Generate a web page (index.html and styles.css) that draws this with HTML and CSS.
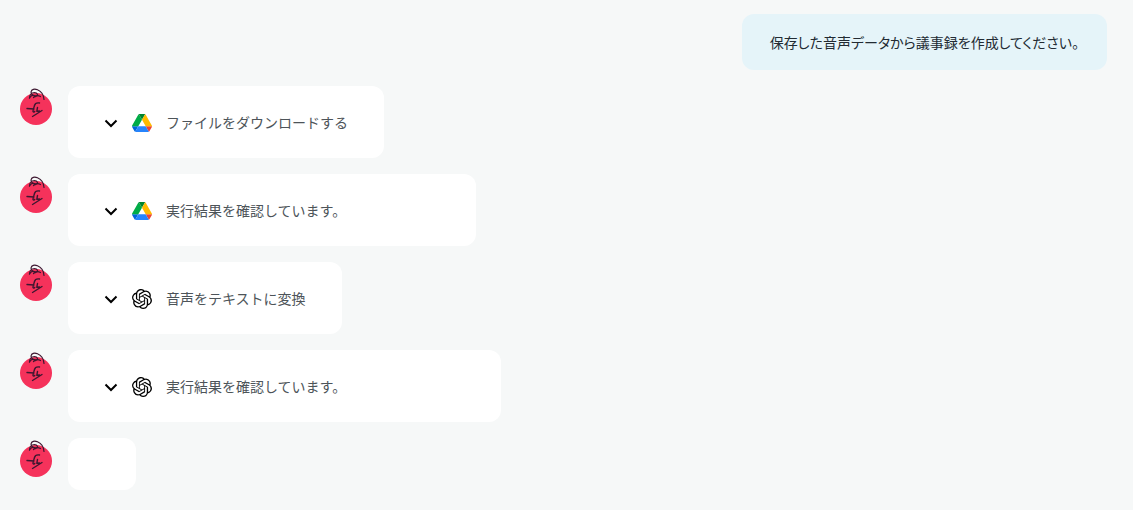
FILE: index.html
```html
<!DOCTYPE html>
<html lang="ja">
<head>
    <meta charset="UTF-8">
    <meta name="viewport" content="width=device-width, initial-scale=1.0">
    <title>チャット</title>
    <link rel="stylesheet" href="styles.css">
</head>
<body>
    <!-- アイコン定義 -->
    <svg class="icon-defs" aria-hidden="true">
        <symbol id="icon-avatar" viewBox="0 0 32 38">
            <circle cx="16" cy="21" r="16" fill="#f5325b"/>
            <g fill="none" stroke="#3d1730" stroke-width="1.2" stroke-linecap="round" stroke-linejoin="round">
                <path d="M9.500 10C9.500 7 11.500 4.500 14.500 4.500C17.500 4.700 18.500 7.500 16.500 8C13.500 8.300 11 6.500 11 4C11.500 1.200 14.500 .6 17.500 1.800C21 3.300 23.700 6.500 24 11.500"/>
                <path d="M9.500 10C11 7 13.500 6.500 15.500 8.500M13.500 9.500C15.500 7.500 18 7 20.500 8.500"/>
                <path stroke-width="1.400" d="M7 20.500L14 21M19.500 15C16.500 14.500 15 15.500 14.500 17.500C14.200 19 13 21.500 13 23.500C13.500 24.500 14.300 24 14.800 23.300M17.500 19.500L16.800 23.300M16.800 23.300L19.500 23M12.500 28.500L22 22.500"/>
            </g>
        </symbol>
        <symbol id="icon-chevron" viewBox="0 0 14 14">
            <path d="M1.500 4.500L7 10L12.500 4.500" fill="none" stroke="#000" stroke-width="2"/>
        </symbol>
        <symbol id="icon-drive" viewBox="0 0 87.300 78">
            <path fill="#0066da" d="m6.600 66.850 3.850 6.650c.8 1.400 1.950 2.500 3.300 3.300l13.750-23.800h-27.500c0 1.550.4 3.100 1.200 4.500z"/>
            <path fill="#00ac47" d="m43.650 25-13.750-23.800c-1.350.8-2.500 1.900-3.300 3.300l-25.400 44a9.060 9.060 0 0 0 -1.200 4.500h27.500z"/>
            <path fill="#ea4335" d="m73.550 76.800c1.350-.8 2.500-1.900 3.300-3.300l1.600-2.750 7.650-13.250c.8-1.400 1.200-2.950 1.200-4.500h-27.500l5.850 11.500z"/>
            <path fill="#00832d" d="m43.650 25 13.750-23.800c-1.350-.8-2.900-1.200-4.500-1.200h-18.500c-1.600 0-3.150.45-4.500 1.200z"/>
            <path fill="#2684fc" d="m59.800 53h-32.300l-13.750 23.800c1.350.8 2.900 1.200 4.500 1.200h50.800c1.600 0 3.150-.45 4.500-1.200z"/>
            <path fill="#ffba00" d="m73.400 26.500-12.700-22c-.8-1.400-1.950-2.500-3.300-3.300l-13.750 23.800 16.150 28h27.450c0-1.550-.4-3.100-1.200-4.500z"/>
        </symbol>
        <symbol id="icon-openai" viewBox="0 0 24 24">
            <path d="M22.2819 9.8211a5.9847 5.9847 0 0 0-.5157-4.9108 6.0462 6.0462 0 0 0-6.5098-2.9A6.0651 6.0651 0 0 0 4.9807 4.1818a5.9847 5.9847 0 0 0-3.9977 2.9 6.0462 6.0462 0 0 0 .7427 7.0966 5.98 5.98 0 0 0 .511 4.9107 6.051 6.051 0 0 0 6.5146 2.9001A5.9847 5.9847 0 0 0 13.2599 24a6.0557 6.0557 0 0 0 5.7718-4.2058 5.9894 5.9894 0 0 0 3.9977-2.9001 6.0557 6.0557 0 0 0-.7475-7.0729zm-9.022 12.6081a4.4755 4.4755 0 0 1-2.8764-1.0408l.1419-.0804 4.7783-2.7582a.7948.7948 0 0 0 .3927-.6813v-6.7369l2.02 1.1686a.071.071 0 0 1 .038.052v5.5826a4.504 4.504 0 0 1-4.4945 4.4944zm-9.6607-4.1254a4.4708 4.4708 0 0 1-.5346-3.0137l.142.0852 4.783 2.7582a.7712.7712 0 0 0 .7806 0l5.8428-3.3685v2.3324a.0804.0804 0 0 1-.0332.0615L9.74 19.9502a4.4992 4.4992 0 0 1-6.1408-1.6464zM2.3408 7.8956a4.485 4.485 0 0 1 2.3655-1.9728V11.6a.7664.7664 0 0 0 .3879.6765l5.8144 3.3543-2.0201 1.1685a.0757.0757 0 0 1-.071 0l-4.8303-2.7865A4.504 4.504 0 0 1 2.3408 7.872zm16.5963 3.8558L13.1038 8.364 15.1192 7.2a.0757.0757 0 0 1 .071 0l4.8303 2.7913a4.4944 4.4944 0 0 1-.6765 8.1042v-5.6772a.79.79 0 0 0-.407-.667zm2.0107-3.0231l-.142-.0852-4.7735-2.7818a.7759.7759 0 0 0-.7854 0L9.409 9.2297V6.8974a.0662.0662 0 0 1 .0284-.0615l4.8303-2.7866a4.4992 4.4992 0 0 1 6.6802 4.66zM8.3065 12.863l-2.02-1.1638a.0804.0804 0 0 1-.038-.0567V6.0742a4.4992 4.4992 0 0 1 7.3757-3.4537l-.142.0805L8.704 5.459a.7948.7948 0 0 0-.3927.6813zm1.0976-2.3654l2.602-1.4998 2.6069 1.4998v2.9994l-2.5974 1.4997-2.6067-1.4997Z"/>
        </symbol>
    </svg>

    <main class="chat">
        <!-- ユーザーの発言 -->
        <div class="user-message">
            <p>保存した音声データから議事録を作成してください。</p>
        </div>

        <!-- アシスタントの実行ステップ -->
        <div class="message">
            <svg class="avatar" aria-hidden="true"><use href="#icon-avatar"/></svg>
            <div class="card">
                <button type="button" class="step">
                    <svg class="chevron" aria-hidden="true"><use href="#icon-chevron"/></svg>
                    <svg class="service" aria-hidden="true"><use href="#icon-drive"/></svg>
                    <span>ファイルをダウンロードする</span>
                </button>
            </div>
        </div>

        <div class="message">
            <svg class="avatar" aria-hidden="true"><use href="#icon-avatar"/></svg>
            <div class="card card-result">
                <button type="button" class="step">
                    <svg class="chevron" aria-hidden="true"><use href="#icon-chevron"/></svg>
                    <svg class="service" aria-hidden="true"><use href="#icon-drive"/></svg>
                    <span>実行結果を確認しています。</span>
                </button>
            </div>
        </div>

        <div class="message">
            <svg class="avatar" aria-hidden="true"><use href="#icon-avatar"/></svg>
            <div class="card">
                <button type="button" class="step">
                    <svg class="chevron" aria-hidden="true"><use href="#icon-chevron"/></svg>
                    <svg class="service" aria-hidden="true"><use href="#icon-openai"/></svg>
                    <span>音声をテキストに変換</span>
                </button>
            </div>
        </div>

        <div class="message">
            <svg class="avatar" aria-hidden="true"><use href="#icon-avatar"/></svg>
            <div class="card card-result-wide">
                <button type="button" class="step">
                    <svg class="chevron" aria-hidden="true"><use href="#icon-chevron"/></svg>
                    <svg class="service" aria-hidden="true"><use href="#icon-openai"/></svg>
                    <span>実行結果を確認しています。</span>
                </button>
            </div>
        </div>

        <div class="message">
            <svg class="avatar" aria-hidden="true"><use href="#icon-avatar"/></svg>
            <div class="card card-empty"></div>
        </div>
    </main>
</body>
</html>
```
FILE: styles.css
```css
* {
    margin: 0;
    padding: 0;
    box-sizing: border-box;
}

body {
    font-family: "Noto Sans CJK JP", sans-serif;
    font-size: 14px;
    line-height: 24px;
    background: #f6f8f8;
    color: #222b33;
}

.icon-defs {
    display: none;
}

.chat {
    display: flex;
    flex-direction: column;
    gap: 16px;
    padding: 14px 26px 18px 20px;
}

.user-message {
    align-self: flex-end;
    padding: 16px 28px;
    background: #e5f4f9;
    border-radius: 12px;
    font-feature-settings: "palt";
}

.message {
    display: flex;
    align-items: flex-start;
    gap: 16px;
}

.avatar {
    flex-shrink: 0;
    width: 32px;
    height: 38px;
    margin-top: 2px;
}

.card {
    padding: 24px 36px;
    background: #fff;
    border-radius: 12px;
}

.card-result {
    min-width: 408px;
}

.card-result-wide {
    min-width: 433px;
}

.card-empty {
    padding: 26px 34px;
}

.step {
    display: flex;
    align-items: center;
    border: none;
    background: none;
    font: inherit;
    color: #4d5459;
    cursor: pointer;
}

.step svg {
    margin-top: 2px;
    margin-right: 14px;
}

.chevron {
    width: 14px;
    height: 14px;
}

.service {
    width: 20px;
    height: 20px;
}
```
